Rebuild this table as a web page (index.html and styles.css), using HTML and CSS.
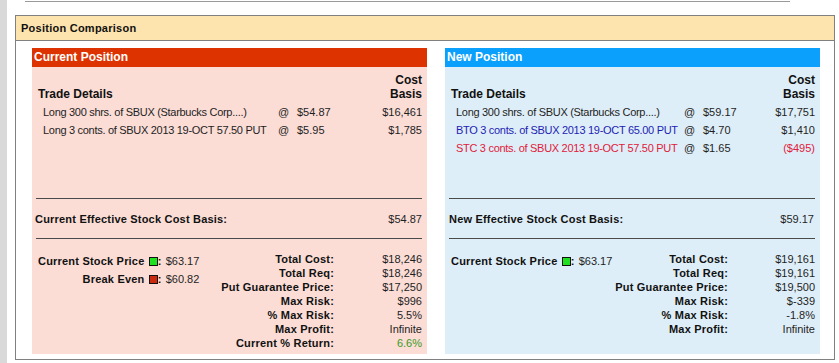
FILE: index.html
```html
<!DOCTYPE html>
<html>
<head>
<meta charset="utf-8">
<title>Position Comparison</title>
<link rel="stylesheet" href="styles.css">
</head>
<body>
<div class="topline"></div>
<div class="box">
  <div class="box-head">Position Comparison</div>
  <div class="box-body">
    <section class="panel cur">
      <div class="panel-head">Current Position</div>
      <div class="trades">
        <table class="trade-table">
          <colgroup><col class="c-desc"><col class="c-at"><col class="c-price"><col></colgroup>
          <thead>
            <tr><th class="t-title">Trade Details</th><th></th><th></th><th class="t-cost">Cost<br>Basis</th></tr>
          </thead>
          <tbody>
            <tr><td class="desc">Long 300 shrs. of SBUX (Starbucks Corp....)</td><td class="at">@</td><td class="price">$54.87</td><td class="cost">$16,461</td></tr>
            <tr><td class="desc">Long 3 conts. of SBUX 2013 19-OCT 57.50 PUT</td><td class="at">@</td><td class="price">$5.95</td><td class="cost">$1,785</td></tr>
          </tbody>
        </table>
      </div>
      <div class="rule"></div>
      <div class="basis"><span class="lbl">Current Effective Stock Cost Basis:</span><span class="val">$54.87</span></div>
      <div class="rule"></div>
      <div class="stats">
        <table class="prices">
          <tr><td class="p-lbl">Current Stock Price <span class="sq green"></span>:</td><td class="p-val">$63.17</td></tr>
          <tr><td class="p-lbl">Break Even <span class="sq red"></span>:</td><td class="p-val">$60.82</td></tr>
        </table>
        <div class="totals">
          <span class="lbl">Total Cost:</span><span class="val">$18,246</span>
          <span class="lbl">Total Req:</span><span class="val">$18,246</span>
          <span class="lbl">Put Guarantee Price:</span><span class="val">$17,250</span>
          <span class="lbl">Max Risk:</span><span class="val">$996</span>
          <span class="lbl">% Max Risk:</span><span class="val">5.5%</span>
          <span class="lbl">Max Profit:</span><span class="val">Infinite</span>
          <span class="lbl">Current % Return:</span><span class="val pos">6.6%</span>
        </div>
      </div>
    </section>
    <section class="panel new">
      <div class="panel-head">New Position</div>
      <div class="trades">
        <table class="trade-table">
          <colgroup><col class="c-desc"><col class="c-at"><col class="c-price"><col></colgroup>
          <thead>
            <tr><th class="t-title">Trade Details</th><th></th><th></th><th class="t-cost">Cost<br>Basis</th></tr>
          </thead>
          <tbody>
            <tr><td class="desc">Long 300 shrs. of SBUX (Starbucks Corp....)</td><td class="at">@</td><td class="price">$59.17</td><td class="cost">$17,751</td></tr>
            <tr><td class="desc bto">BTO 3 conts. of SBUX 2013 19-OCT 65.00 PUT</td><td class="at">@</td><td class="price">$4.70</td><td class="cost">$1,410</td></tr>
            <tr><td class="desc stc">STC 3 conts. of SBUX 2013 19-OCT 57.50 PUT</td><td class="at">@</td><td class="price">$1.65</td><td class="cost neg">($495)</td></tr>
          </tbody>
        </table>
      </div>
      <div class="rule"></div>
      <div class="basis"><span class="lbl">New Effective Stock Cost Basis:</span><span class="val">$59.17</span></div>
      <div class="rule"></div>
      <div class="stats">
        <table class="prices">
          <tr><td class="p-lbl">Current Stock Price <span class="sq green"></span>:</td><td class="p-val">$63.17</td></tr>
        </table>
        <div class="totals">
          <span class="lbl">Total Cost:</span><span class="val">$19,161</span>
          <span class="lbl">Total Req:</span><span class="val">$19,161</span>
          <span class="lbl">Put Guarantee Price:</span><span class="val">$19,500</span>
          <span class="lbl">Max Risk:</span><span class="val">$-339</span>
          <span class="lbl">% Max Risk:</span><span class="val">-1.8%</span>
          <span class="lbl">Max Profit:</span><span class="val">Infinite</span>
        </div>
      </div>
    </section>
  </div>
</div>
</body>
</html>
```
FILE: styles.css
```css
html, body {
  margin: 0;
  padding: 0;
}
body {
  background: #fff;
  border-left: 7px solid #d9d9d9;
  height: 363px;
  box-sizing: border-box;
  font-family: "Liberation Sans", Arial, sans-serif;
  font-size: 11px;
  color: #1e1e1e;
}
.topline {
  height: 1px;
  margin: 0 49px 0 18px;
  border-bottom: 1px solid #9a9a9a;
}
.box {
  margin: 13px 0 0 8px;
  width: 820px;
  box-sizing: border-box;
  border: 1px solid #808080;
}
.box-head {
  height: 24px;
  line-height: 24px;
  background: #fde3ad;
  border-bottom: 1px solid #808080;
  padding-left: 5px;
  font-weight: bold;
  letter-spacing: 0.25px;
  color: #111;
}
.box-body {
  display: flex;
  gap: 18px;
  padding: 7px 14px 5px 16px;
}
.panel {
  height: 306px;
  display: flex;
  flex-direction: column;
}
.panel.cur { width: 395px; background: #fbddd6; }
.panel.new { width: 375px; background: #deeef8; }
.panel-head {
  height: 19px;
  line-height: 19px;
  padding-left: 2px;
  color: #fff;
  font-weight: bold;
  font-size: 12px;
}
.cur .panel-head { background: #dd3300; }
.new .panel-head { background: #0aa0fb; }
.trades {
  height: 131px;
  box-sizing: border-box;
  padding: 6px 5px 0 6px;
}
.trade-table {
  width: 100%;
  table-layout: fixed;
  border-collapse: collapse;
}
.trade-table th, .trade-table td {
  padding: 0;
  white-space: nowrap;
  overflow: visible;
}
.cur .c-desc { width: 240px; }
.new .c-desc { width: 233px; }
.c-at { width: 10px; }
.cur .c-price { width: 57px; }
.new .c-price { width: 64px; }
.trade-table .t-title {
  text-align: left;
  vertical-align: bottom;
  font-size: 12px;
  line-height: 14px;
  padding-bottom: 2px;
  color: #111;
}
.trade-table .t-cost {
  text-align: right;
  font-size: 12px;
  line-height: 14px;
  padding-bottom: 2px;
  color: #111;
}
.trade-table td {
  height: 18px;
  line-height: 18px;
}
.trade-table .desc {
  padding-left: 5px;
  letter-spacing: -0.3px;
}
.at { text-align: right; }
.trade-table .price { padding-left: 9px; }
.cost { text-align: right; }
.bto { color: #1d1db4; }
.stc { color: #e0203a; }
.neg { color: #e0203a; }
.rule {
  height: 1px;
  margin: 0 5px 0 4px;
  background: #4a4a4a;
}
.basis {
  height: 39px;
  display: flex;
  align-items: center;
  justify-content: space-between;
  padding: 0 5px 0 3px;
}
.new .basis { padding: 0 6px 0 4px; }
.lbl {
  font-weight: bold;
  letter-spacing: 0.2px;
  color: #111;
}
.stats {
  flex: 1;
  display: flex;
  padding: 13px 5px 0 6px;
}
.prices {
  border-collapse: collapse;
  align-self: flex-start;
}
.prices td {
  padding: 0;
  height: 18px;
  line-height: 18px;
  white-space: nowrap;
  vertical-align: top;
}
.p-lbl {
  text-align: right;
  font-weight: bold;
  letter-spacing: 0.2px;
  color: #111;
}
.prices .p-val { padding-left: 4px; }
.sq {
  display: inline-block;
  width: 7px;
  height: 7px;
  border: 1px solid #111;
  vertical-align: -1px;
  margin-left: 1px;
}
.sq.green { background: #1fe11f; }
.sq.red { background: #cc2a0c; }
.totals {
  margin-left: auto;
  display: grid;
  grid-template-columns: auto 88px;
  grid-auto-rows: 14px;
  line-height: 14px;
  align-self: flex-start;
}
.new .totals { grid-template-columns: auto 87px; }
.totals .lbl, .totals .val { text-align: right; white-space: nowrap; }
.pos { color: #3a9a1e; }
```
